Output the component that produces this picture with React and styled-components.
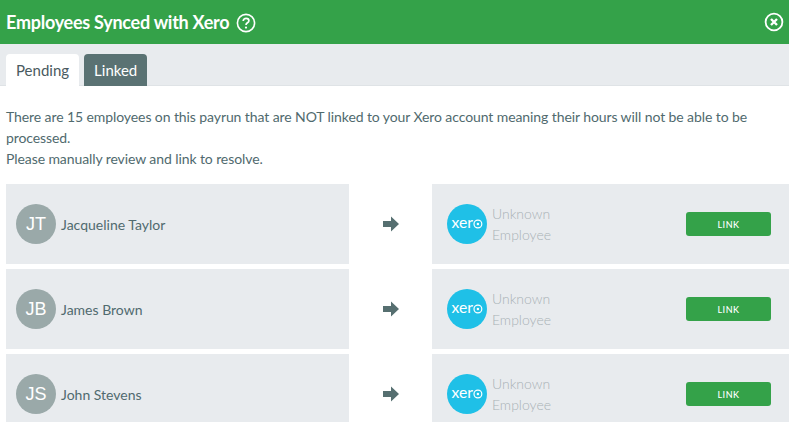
import React from "react";
import styled, { createGlobalStyle } from "styled-components";

const Global = createGlobalStyle`
  html, body { margin: 0; padding: 0; background: #fff; }
  body { font-family: Lato, "Open Sans", sans-serif; overflow: hidden; }
`;

const Page = styled.div`
  width: 789px;
  height: 422px;
  overflow: hidden;
  background: #fff;
`;

const Header = styled.header`
  height: 44px;
  background: #34a249;
  color: #fff;
  display: flex;
  align-items: center;
  padding: 0 5px 0 6px;
`;

const Title = styled.h1`
  margin: -1px 0 0;
  font-size: 18px;
  font-weight: 700;
  line-height: 44px;
  letter-spacing: -0.26px;
`;

const HelpIcon = styled.svg`
  width: 20px;
  height: 20px;
  margin-left: 7px;
  margin-top: 1px;
`;

const CloseIcon = styled.svg`
  width: 20px;
  height: 20px;
  margin-left: auto;
`;

const TabBar = styled.nav`
  height: 42px;
  box-sizing: border-box;
  background: #e8ebee;
  border-bottom: 1px solid #dfe3e6;
  padding: 10px 0 0 6px;
  display: flex;
  gap: 5px;
`;

const Tab = styled.div`
  height: 32px;
  box-sizing: border-box;
  padding: 0 10px;
  border-radius: 4px 4px 0 0;
  background: ${(p) => (p.$active ? "#fff" : "#5a7273")};
  color: ${(p) => (p.$active ? "#4a5a60" : "#fff")};
  font-size: 15px;
  line-height: 33px;
`;

const Message = styled.p`
  margin: 20px 0 15px;
  padding: 0 6px;
  font-size: 14px;
  line-height: 21px;
  letter-spacing: -0.09px;
  color: #506a6e;
`;

const Rows = styled.div`
  display: flex;
  flex-direction: column;
  gap: 5px;
  padding-left: 6px;
`;

const Row = styled.div`
  display: grid;
  grid-template-columns: 343px 83px 1fr;
  height: 80px;
`;

const Cell = styled.div`
  background: #e8ebee;
  display: flex;
  align-items: center;
  padding-left: ${(p) => p.$inset}px;
`;

const Avatar = styled.div`
  width: 40px;
  height: 40px;
  border-radius: 50%;
  background: #9aa9a9;
  color: #fff;
  font-size: 18px;
  font-family: "Liberation Sans", Arial, sans-serif;
  display: flex;
  align-items: center;
  justify-content: center;
  flex: none;
`;

const Name = styled.span`
  margin-left: 5px;
  font-size: 14px;
  color: #506a6e;
`;

const ArrowCell = styled.div`
  display: flex;
  align-items: center;
  justify-content: center;
`;

const ArrowIcon = styled.svg`
  width: 16px;
  height: 16px;
`;

const LogoIcon = styled.svg`
  width: 40px;
  height: 40px;
  flex: none;
`;

const Unknown = styled.span`
  margin-left: 5px;
  width: 80px;
  font-size: 14px;
  line-height: 21px;
  font-weight: 300;
  color: #a9b2b6;
`;

const LinkButton = styled.button`
  margin-left: auto;
  margin-right: 18px;
  width: 85px;
  height: 24px;
  border: 0;
  padding: 0;
  border-radius: 3px;
  background: #34a249;
  color: #fff;
  font-family: Lato, sans-serif;
  font-size: 9px;
  font-weight: 500;
  letter-spacing: 0.5px;
`;

const Help = () => (
  <HelpIcon viewBox="0 0 20 20" fill="none" stroke="#fff">
    <circle cx="10" cy="10" r="8.6" strokeWidth="1.6" />
    <path d="M7.2 8c0-1.7 1.2-2.7 2.9-2.7 1.6 0 2.8 1 2.8 2.4 0 2.2-2.9 2-2.9 4.3" strokeWidth="1.7" />
    <circle cx="10" cy="14.6" r="1.1" fill="#fff" stroke="none" />
  </HelpIcon>
);

const Close = () => (
  <CloseIcon viewBox="0 0 20 20" fill="none" stroke="#fff">
    <circle cx="10" cy="10" r="8.4" strokeWidth="1.8" />
    <path d="M7 7l6 6M13 7l-6 6" strokeWidth="2.4" />
  </CloseIcon>
);

const Arrow = () => (
  <ArrowIcon viewBox="0 0 16 16">
    <path d="M0 5h8V0.5L16 8l-8 7.5V11H0z" fill="#566f70" />
  </ArrowIcon>
);

const XeroLogo = () => (
  <LogoIcon viewBox="0 0 40 40">
    <circle cx="20" cy="20" r="20" fill="#1fc0e7" />
    <text x="4.6" y="24.2" fontFamily="Lato, sans-serif" fontSize="15.5" fontWeight="400" fill="#fff" textLength="21.4" lengthAdjust="spacingAndGlyphs">xer</text>
    <circle cx="30.9" cy="20" r="3.9" fill="none" stroke="#fff" strokeWidth="1.2" />
    <circle cx="30.9" cy="20" r="1.2" fill="#fff" />
  </LogoIcon>
);

const people = [
  ["JT", "Jacqueline Taylor"],
  ["JB", "James Brown"],
  ["JS", "John Stevens"],
];

export default function App() {
  return (
    <Page>
      <Global />
      <Header>
        <Title>Employees Synced with Xero</Title>
        <Help />
        <Close />
      </Header>
      <TabBar>
        <Tab $active>Pending</Tab>
        <Tab>Linked</Tab>
      </TabBar>
      <Message>
        There are 15 employees on this payrun that are NOT linked to your Xero account meaning their hours will not be able to be processed.
        <br />
        Please manually review and link to resolve.
      </Message>
      <Rows>
        {people.map(([initials, name]) => (
          <Row key={initials}>
            <Cell $inset={10}>
              <Avatar>{initials}</Avatar>
              <Name>{name}</Name>
            </Cell>
            <ArrowCell>
              <Arrow />
            </ArrowCell>
            <Cell $inset={15}>
              <XeroLogo />
              <Unknown>Unknown Employee</Unknown>
              <LinkButton>LINK</LinkButton>
            </Cell>
          </Row>
        ))}
      </Rows>
    </Page>
  );
}
